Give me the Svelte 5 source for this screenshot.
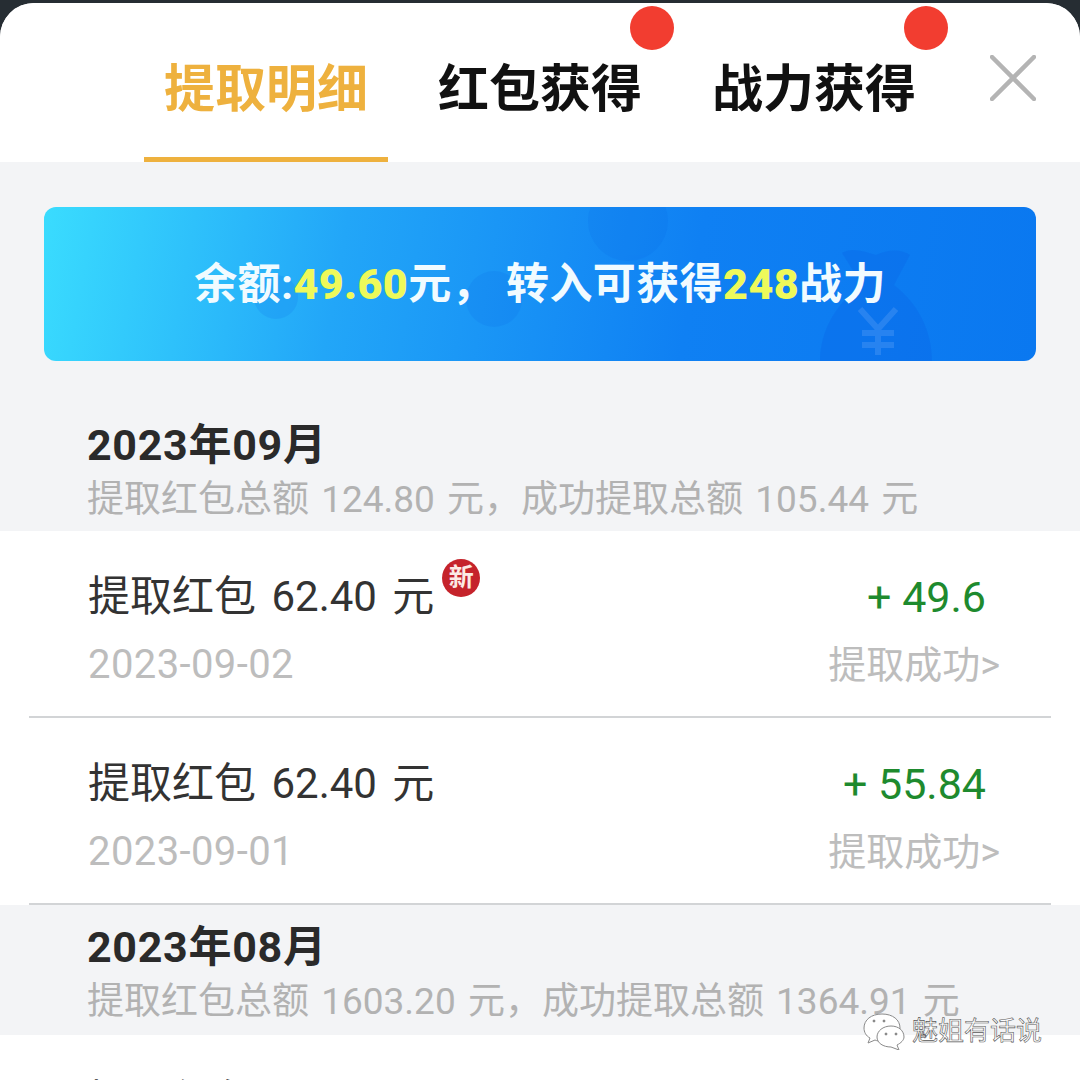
<script>
  const tabs = [
    { label: '提取明细', active: true },
    { label: '红包获得', dot: true },
    { label: '战力获得', dot: true }
  ];

  const months = [
    {
      title: '2023年09月',
      summary: '提取红包总额 124.80 元，成功提取总额 105.44 元',
      first: true,
      rows: [
        { name: '提取红包 62.40 元', amount: '+ 49.6', date: '2023-09-02', isNew: true },
        { name: '提取红包 62.40 元', amount: '+ 55.84', date: '2023-09-01' }
      ]
    },
    {
      title: '2023年08月',
      summary: '提取红包总额 1603.20 元，成功提取总额 1364.91 元',
      rows: [{ name: '提取红包 62.40 元', amount: '+ 55.84', date: '2023-08-31' }]
    }
  ];
</script>

<div class="screen">
  <div class="sheet">
    <header class="tabs">
      {#each tabs as tab}
        <div class="tab" class:active={tab.active}>
          <span>{tab.label}</span>
          {#if tab.dot}<i class="dot"></i>{/if}
        </div>
      {/each}
      <svg class="close" viewBox="0 0 46 46" width="46" height="46" fill="none" stroke="#b4b4b4" stroke-width="4.5" stroke-linecap="round">
        <path d="M2 2 L44 44 M44 2 L2 44" />
      </svg>
    </header>

    <div class="banner">
      <svg class="bags" viewBox="0 0 992 154" width="992" height="154">
        <g fill="#0a62e6" opacity="0.14">
          <circle cx="584" cy="14" r="40" />
          <circle cx="450" cy="92" r="28" />
          <circle cx="232" cy="90" r="22" />
        </g>
        <path d="M798 46 C806 40 820 44 832 48 C844 42 858 42 866 48 L850 78 C874 96 888 124 888 154 L776 154 C776 124 792 96 818 78 Z" fill="#0a62e6" opacity="0.32" />
        <path d="M816 102 L834 122 L852 102 M834 122 L834 148 M818 126 L850 126 M818 138 L850 138" fill="none" stroke="#3f8ff2" stroke-width="6" opacity="0.55" />
      </svg>
      <p>余额:<b>49.60</b>元， 转入可获得<b>248</b>战力</p>
    </div>

    {#each months as month}
      <section class="month" class:first={month.first}>
        <h2>{month.title}</h2>
        <p>{month.summary}</p>
      </section>
      <div class="rows">
        {#each month.rows as row}
          <div class="row">
            <div class="line">
              <span class="name">
                {row.name}
                {#if row.isNew}<em class="new">新</em>{/if}
              </span>
              <span class="amount">{row.amount}</span>
            </div>
            <div class="line sub">
              <span class="date">{row.date}</span>
              <span class="status">提取成功&gt;</span>
            </div>
          </div>
        {/each}
      </div>
    {/each}
  </div>

  <div class="watermark">
    <svg viewBox="0 0 44 38" width="44" height="38" fill="#fff" stroke="#8a8a8a" stroke-width="1">
      <path d="M20 2 C9 2 2 8 2 16 C2 20 4 24 8 26 L6 31 L13 28 C15 29 17 29 20 29 C31 29 38 23 38 16 C38 8 31 2 20 2 Z" />
      <path d="M29 14 C21 14 15 19 15 25 C15 31 21 35 29 35 L37 38 L35 33 C39 31 42 28 42 25 C42 19 37 14 29 14 Z" />
      <circle cx="12" cy="9" r="1" fill="#666" />
      <circle cx="22" cy="9" r="1" fill="#666" />
      <circle cx="24" cy="22" r="1" fill="#666" />
      <circle cx="34" cy="22" r="1" fill="#666" />
    </svg>
    <span>魅姐有话说</span>
  </div>
</div>

<style>
  :global(body) { margin: 0; background: #262d33; }

  .screen {
    position: relative;
    width: 1080px;
    height: 1080px;
    overflow: hidden;
    padding-top: 3px;
    box-sizing: border-box;
    font-family: "Roboto", "Noto Sans CJK SC", sans-serif;
  }

  .sheet {
    background: #f3f4f6;
    border-radius: 34px 34px 0 0;
    overflow: hidden;
    height: 1077px;
  }

  .tabs {
    display: flex;
    height: 159px;
    padding-left: 144px;
    background: #fff;
    position: relative;
  }
  .tab {
    position: relative;
    width: 244px;
    margin-right: 30px;
    box-sizing: border-box;
    padding-top: 53px;
    text-align: center;
    font-size: 51px;
    line-height: 68px;
    font-weight: 700;
    color: #111;
  }
  .tab.active { color: #eeb13e; border-bottom: 5px solid #eeb13e; height: 159px; }
  .dot {
    position: absolute;
    top: 3px;
    right: -12px;
    width: 44px;
    height: 44px;
    border-radius: 50%;
    background: #f23d30;
  }
  .close { position: absolute; top: 52px; left: 990px; }

  .banner {
    position: relative;
    margin: 45px 44px 0;
    height: 154px;
    border-radius: 12px;
    overflow: hidden;
    background: linear-gradient(100deg, #3adcfe 0%, #22a6f8 30%, #0f80f3 65%, #0a78f0 100%);
    display: flex;
    align-items: center;
    justify-content: center;
  }
  .bags { position: absolute; inset: 0; }
  .banner p {
    position: relative;
    margin: 0;
    font-size: 43px;
    line-height: 56px;
    font-weight: 700;
    letter-spacing: 0.4px;
    color: #f1fbff;
    white-space: pre;
  }
  .banner b { color: #eef95a; }

  .month { height: 130px; padding: 17px 0 0 87px; box-sizing: border-box; }
  .month.first { height: 170px; padding-top: 59px; }
  .month h2 {
    margin: 0;
    font-size: 43px;
    line-height: 50px;
    font-weight: 700;
    letter-spacing: 0.7px;
    color: #2a2a2a;
  }
  .month p {
    margin: 7px 0 0;
    font-size: 37px;
    line-height: 46px;
    word-spacing: 3px;
    color: #b2b2b2;
    white-space: nowrap;
  }

  .rows { background: #fff; padding: 0 29px; }
  .row { height: 187px; box-sizing: border-box; padding: 38px 65px 0 59px; border-bottom: 2px solid #d2d4d6; }
  .line { display: flex; justify-content: space-between; align-items: center; }
  .name { position: relative; font-size: 42px; line-height: 56px; word-spacing: 5px; color: #333; }
  .amount { font-size: 43px; line-height: 56px; color: #1e8a2e; }
  .sub { margin-top: 16px; margin-right: -14px; line-height: 48px; color: #bdbdbd; }
  .date { font-size: 40px; letter-spacing: 0.4px; }
  .status { font-size: 38px; }
  .new {
    position: absolute;
    top: -10px;
    right: -46px;
    width: 38px;
    height: 38px;
    border-radius: 50%;
    background: #c5232b;
    color: #fbe9e4;
    font-size: 25px;
    line-height: 38px;
    font-style: normal;
    font-weight: 700;
    text-align: center;
  }

  .watermark {
    position: absolute;
    top: 1012px;
    left: 862px;
    display: flex;
    align-items: center;
    gap: 6px;
    font-size: 26px;
    line-height: 38px;
    color: #fff;
    -webkit-text-stroke: 0.6px #555;
  }
</style>
